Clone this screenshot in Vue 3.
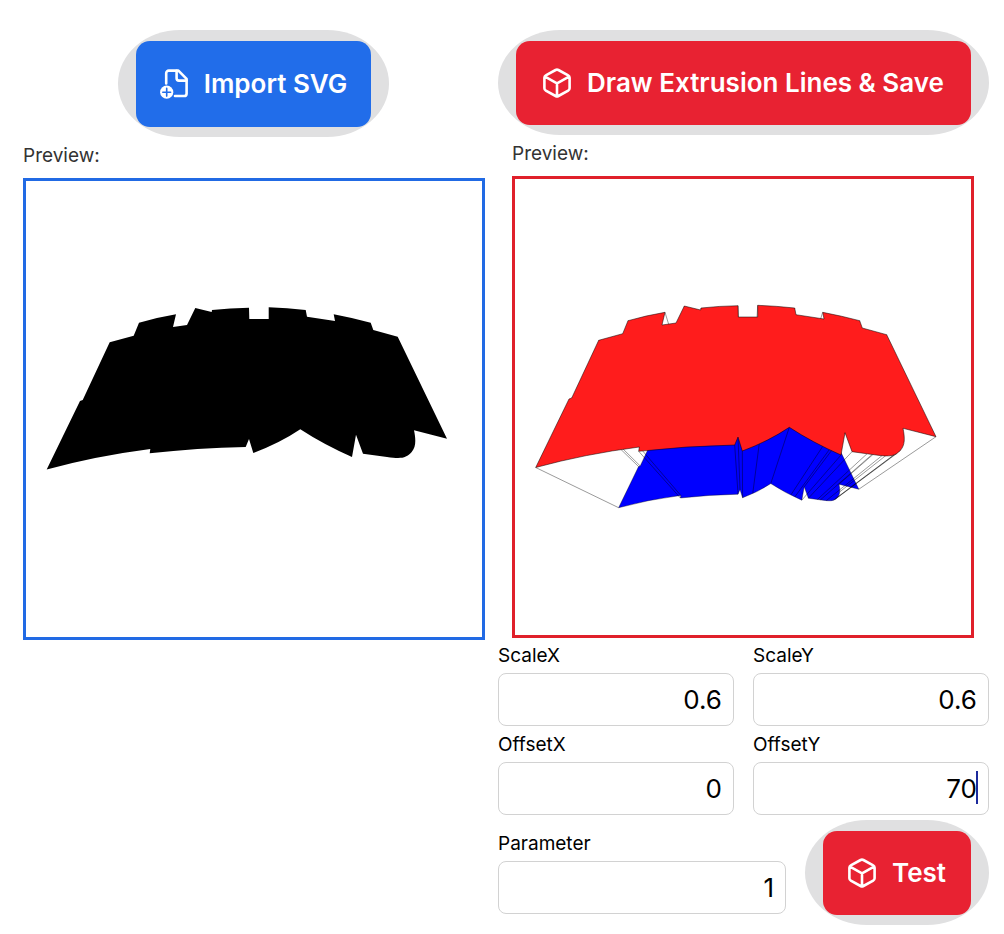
<template>
  <main class="page">
    <section class="column">
      <div class="halo halo-import">
        <button type="button" class="action action-blue">
          <svg class="icon" viewBox="0 0 28 30" aria-hidden="true">
            <path d="M6.2 14.5V4.2a2.6 2.6 0 0 1 2.6-2.6h9.6l8.2 8.2v14.6a2.6 2.6 0 0 1-2.6 2.6h-9" />
            <path d="M16.6 1.8v7.4a2.4 2.4 0 0 0 2.4 2.4h7.4" />
            <circle class="icon-badge" cx="6.7" cy="23.2" r="6.6" />
            <path class="icon-plus" d="M6.7 19.3v7.8M2.8 23.2h7.8" />
          </svg>
          <span>Import SVG</span>
        </button>
      </div>
      <p class="caption">Preview:</p>
      <div class="preview preview-blue">
        <svg viewBox="0 0 456 456" role="img" aria-label="Imported shape">
          <path :d="outline" />
        </svg>
      </div>
    </section>

    <section class="column">
      <div class="halo">
        <button type="button" class="action action-red">
          <svg class="icon" viewBox="0 0 28 30" aria-hidden="true">
            <path :d="cube" />
          </svg>
          <span>Draw Extrusion Lines &amp; Save</span>
        </button>
      </div>
      <p class="caption">Preview:</p>
      <div class="preview preview-red">
        <svg viewBox="0 0 456 456" role="img" aria-label="Extruded shape">
          <path class="back" :d="outline" :transform="backTransform" />
          <line
            v-for="(edge, index) in edges"
            :key="index"
            class="edge"
            :x1="edge.x1"
            :y1="edge.y1"
            :x2="edge.x2"
            :y2="edge.y2"
          />
          <path class="front" :d="outline" />
        </svg>
      </div>

      <form class="settings" @submit.prevent>
        <div class="fields">
          <div v-for="field in fields" :key="field.id" class="field">
            <label :for="field.id">{{ field.label }}</label>
            <div class="control">
              <input :id="field.id" v-model="field.value" type="text" inputmode="decimal" />
              <span v-if="field.active" class="caret" />
            </div>
          </div>
        </div>
        <div class="test-row">
          <div class="field">
            <label for="parameter">Parameter</label>
            <div class="control">
              <input id="parameter" v-model="parameter" type="text" inputmode="decimal" />
            </div>
          </div>
          <div class="halo">
            <button type="submit" class="action action-red">
              <svg class="icon" viewBox="0 0 28 30" aria-hidden="true">
                <path :d="cube" />
              </svg>
              <span>Test</span>
            </button>
          </div>
        </div>
      </form>
    </section>
  </main>
</template>

<script setup>
import { computed, ref } from 'vue'

const outline = `M20.7 288.5 L54 220 L56.7 219 L83.7 161.3 L107.7 154.7 L113 141.7
  Q131 136.5 150 133.3 L147 146 L161 144 L169.3 127 L185.7 131 L186 129
  Q204 127 223 126.7 L223.3 138 L242.7 138 L242.7 126.3 Q261 127 279.7 129
  L281 135.7 L309 140 L307.7 133.3 Q327 137 344.7 141.7 L347.3 149
  L371.7 155.7 L421 257.7 L388 249.3 C390 259 390 266 385.7 271
  C380 277.5 375 277.8 361 276 L337 272.7 L330 253.7 L326 276
  Q297.5 263.5 274.3 248.3 Q254 262 227.3 272 L223 258 L219.7 266
  Q171 267 123.7 272.3 L124.3 268 Q70 275 20.7 288.5 Z`

const cube =
  'M12.6 2a3 3 0 0 1 2.8 0l9.8 5.4a2.6 2.6 0 0 1 1.4 2.3v10.6a2.6 2.6 0 0 1-1.4 2.3L15.4 28a3 3 0 0 1-2.8 0l-9.8-5.4a2.6 2.6 0 0 1-1.4-2.3V9.7a2.6 2.6 0 0 1 1.4-2.3zM2 8.6l12 6.7 12-6.7M14 15.3v12.8'

// corners of the outline plus a few samples along its curves
const points = [
  [20.7, 288.5], [54, 220], [56.7, 219], [83.7, 161.3], [107.7, 154.7], [113, 141.7],
  [150, 133.3], [147, 146], [161, 144], [169.3, 127], [185.7, 131], [186, 129],
  [223, 126.7], [223.3, 138], [242.7, 138], [242.7, 126.3], [279.7, 129], [281, 135.7],
  [309, 140], [307.7, 133.3], [344.7, 141.7], [347.3, 149], [371.7, 155.7], [421, 257.7],
  [388, 249.3], [389.3, 262], [385.7, 271], [382, 274.3], [379, 275.8], [367, 276.6],
  [357, 275.5], [352, 274.8], [337, 272.7], [330, 253.7], [326, 276], [314.3, 270.6],
  [307.7, 267.4], [274.3, 248.3], [244.3, 264.3], [227.3, 272], [223, 258], [219.7, 266],
  [123.7, 272.3], [124.3, 268],
]

const fields = ref([
  { id: 'scale-x', label: 'ScaleX', value: '0.6' },
  { id: 'scale-y', label: 'ScaleY', value: '0.6' },
  { id: 'offset-x', label: 'OffsetX', value: '0' },
  { id: 'offset-y', label: 'OffsetY', value: '70', active: true },
])
const parameter = ref('1')

const matrix = computed(() => {
  const [sx, sy, ox, oy] = fields.value.map((f) => Number(f.value) || 0)
  return { sx, sy, tx: 228 * (1 - sx) + ox, ty: 214 * (1 - sy) + oy }
})

const backTransform = computed(() => {
  const { sx, sy, tx, ty } = matrix.value
  return `matrix(${sx} 0 0 ${sy} ${tx} ${ty})`
})

const edges = computed(() => {
  const { sx, sy, tx, ty } = matrix.value
  return points.map(([x, y]) => ({ x1: x, y1: y, x2: x * sx + tx, y2: y * sy + ty }))
})
</script>

<style>
body {
  margin: 0;
  background: #fff;
}
</style>

<style scoped>
.page {
  display: grid;
  grid-template-columns: 489fr 491fr;
  align-items: start;
  padding: 30px 15px 8px 9px;
  font-family: Inter, 'Liberation Sans', sans-serif;
  color: #000;
}

.column {
  display: flex;
  flex-direction: column;
  min-width: 0;
}

.halo {
  display: flex;
  box-sizing: border-box;
  padding: 11px 18px 10px;
  border-radius: 62px / 50%;
  background: #e0e0e1;
}

.halo-import {
  align-self: center;
}

.action {
  display: flex;
  flex: 1;
  align-items: center;
  justify-content: center;
  gap: 16px;
  padding: 26px 25px;
  border: 0;
  border-radius: 14px;
  font: inherit;
  font-size: 26px;
  font-weight: 600;
  line-height: 32px;
  white-space: nowrap;
  color: #fff;
  cursor: pointer;
}

.halo-import .action {
  padding: 27px 24px;
}

.action-blue {
  background: #216dea;
}

.action-red {
  background: #e82232;
}

.icon {
  flex: none;
  width: 28px;
  height: 30px;
  fill: none;
  stroke: #fff;
  stroke-width: 2.6;
  stroke-linecap: round;
  stroke-linejoin: round;
}

.icon-badge {
  fill: #fff;
  stroke: none;
}

.icon-plus {
  stroke: #216dea;
  stroke-width: 1.6;
}

.caption {
  margin: 0;
  padding: 0 14px 3px;
  font-size: 19px;
  line-height: 38px;
  color: #333;
}

.preview {
  border: 3px solid;
}

.preview svg {
  display: block;
  width: 100%;
}

.preview-blue {
  margin: 0 13px 0 14px;
  border-color: #216ae4;
}

.preview-red {
  margin: 0 15px 0 14px;
  border-color: #e0202a;
}

.back {
  fill: #00f;
  stroke: #000;
  stroke-width: 0.6;
}

.edge {
  stroke: #000;
  stroke-width: 0.4;
}

.front {
  fill: #ff1c1c;
  stroke: #000;
  stroke-width: 0.5;
}

.fields {
  display: grid;
  grid-template-columns: 1fr 1fr;
  gap: 1px 19px;
}

.field {
  min-width: 0;
}

.field label {
  display: block;
  font-size: 19px;
  line-height: 35px;
}

.control {
  position: relative;
}

.control input {
  display: block;
  box-sizing: border-box;
  width: 100%;
  height: 53px;
  padding: 0 11px;
  border: 1px solid #d2d2d2;
  border-radius: 8px;
  background: #fff;
  font: inherit;
  font-size: 26px;
  text-align: right;
  color: #000;
}

.caret {
  position: absolute;
  top: 9px;
  right: 11px;
  width: 2px;
  height: 33px;
  background: #1c2a9c;
}

.test-row {
  display: flex;
  align-items: center;
  gap: 19px;
  padding-top: 5px;
}

.test-row .field {
  flex: 1;
  padding-bottom: 5px;
}
</style>
